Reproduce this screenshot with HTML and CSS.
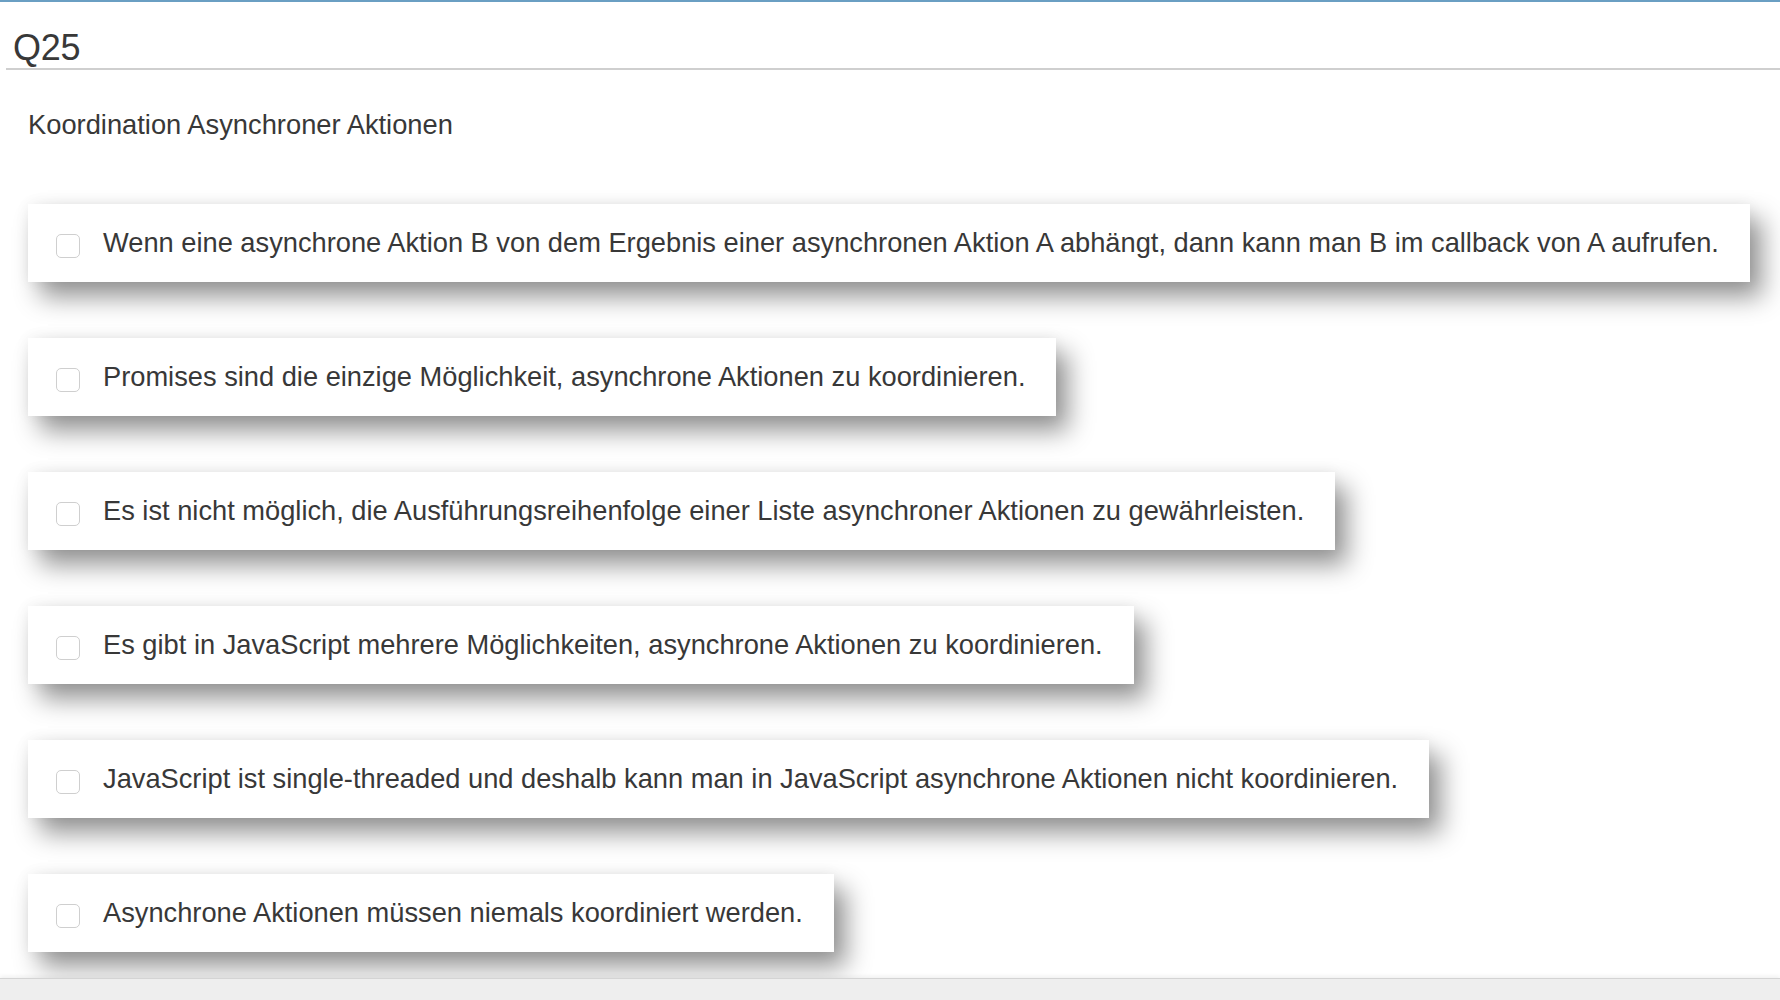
FILE: index.html
```html
<!DOCTYPE html>
<html lang="de">
<head>
<meta charset="utf-8">
<title>Q25</title>
<link rel="stylesheet" href="styles.css">
</head>
<body>
<div class="topline"></div>
<main class="page">
  <header class="qhead"><h1 class="qtitle">Q25</h1></header>
  <p class="subtitle">Koordination Asynchroner Aktionen</p>
  <ul class="answers">
    <li class="card"><span class="box"></span><span class="label">Wenn eine asynchrone Aktion B von dem Ergebnis einer asynchronen Aktion A abhängt, dann kann man B im callback von A aufrufen.</span></li>
    <li class="card"><span class="box"></span><span class="label">Promises sind die einzige Möglichkeit, asynchrone Aktionen zu koordinieren.</span></li>
    <li class="card"><span class="box"></span><span class="label">Es ist nicht möglich, die Ausführungsreihenfolge einer Liste asynchroner Aktionen zu gewährleisten.</span></li>
    <li class="card"><span class="box"></span><span class="label">Es gibt in JavaScript mehrere Möglichkeiten, asynchrone Aktionen zu koordinieren.</span></li>
    <li class="card"><span class="box"></span><span class="label">JavaScript ist single-threaded und deshalb kann man in JavaScript asynchrone Aktionen nicht koordinieren.</span></li>
    <li class="card"><span class="box"></span><span class="label">Asynchrone Aktionen müssen niemals koordiniert werden.</span></li>
  </ul>
</main>
<footer class="footer"></footer>
</body>
</html>
```

FILE: styles.css
```css
html, body {
  margin: 0;
  padding: 0;
  height: 1000px;
  overflow: hidden;
  background: #fff;
  font-family: "Helvetica Neue", Helvetica, "Liberation Sans", Arial, sans-serif;
  color: #383838;
}
body {
  display: flex;
  flex-direction: column;
}
.topline {
  height: 2px;
  background: #6a9fc3;
  flex: none;
}
.page {
  flex: 1;
  padding-left: 6px;
  min-height: 0;
}
.qhead {
  border-bottom: 2px solid #cfcfcf;
  height: 68px;
  box-sizing: border-box;
  padding-left: 7px;
  display: flex;
  align-items: flex-end;
}
.qtitle {
  margin: 0;
  font-weight: normal;
  font-size: 36px;
  line-height: 40px;
  letter-spacing: -0.3px;
}
.subtitle {
  margin: 39px 0 0 22px;
  font-size: 27.3px;
  line-height: 32px;
}
.answers {
  list-style: none;
  margin: 63px 0 0 22px;
  padding: 0;
  display: flex;
  flex-direction: column;
  gap: 56px;
}
.card {
  width: fit-content;
  height: 78px;
  box-sizing: border-box;
  background: #fff;
  display: flex;
  align-items: center;
  padding: 0 31px 0 28px;
  gap: 23px;
  box-shadow: 12px 15px 24px rgba(0,0,0,0.42), 0 0 14px rgba(0,0,0,0.06);
}
.box {
  width: 22px;
  height: 22px;
  border: 1px solid #cfcfcf;
  border-radius: 5px;
  background: #fff;
  flex: none;
  margin-top: 5px;
}
.label {
  font-size: 27.25px;
  line-height: 32px;
  white-space: nowrap;
}
.footer {
  flex: none;
  height: 21px;
  background: #eeeeee;
  border-top: 1px solid #d4d4d4;
  box-shadow: 0 -2px 4px rgba(0,0,0,0.06);
}
```
